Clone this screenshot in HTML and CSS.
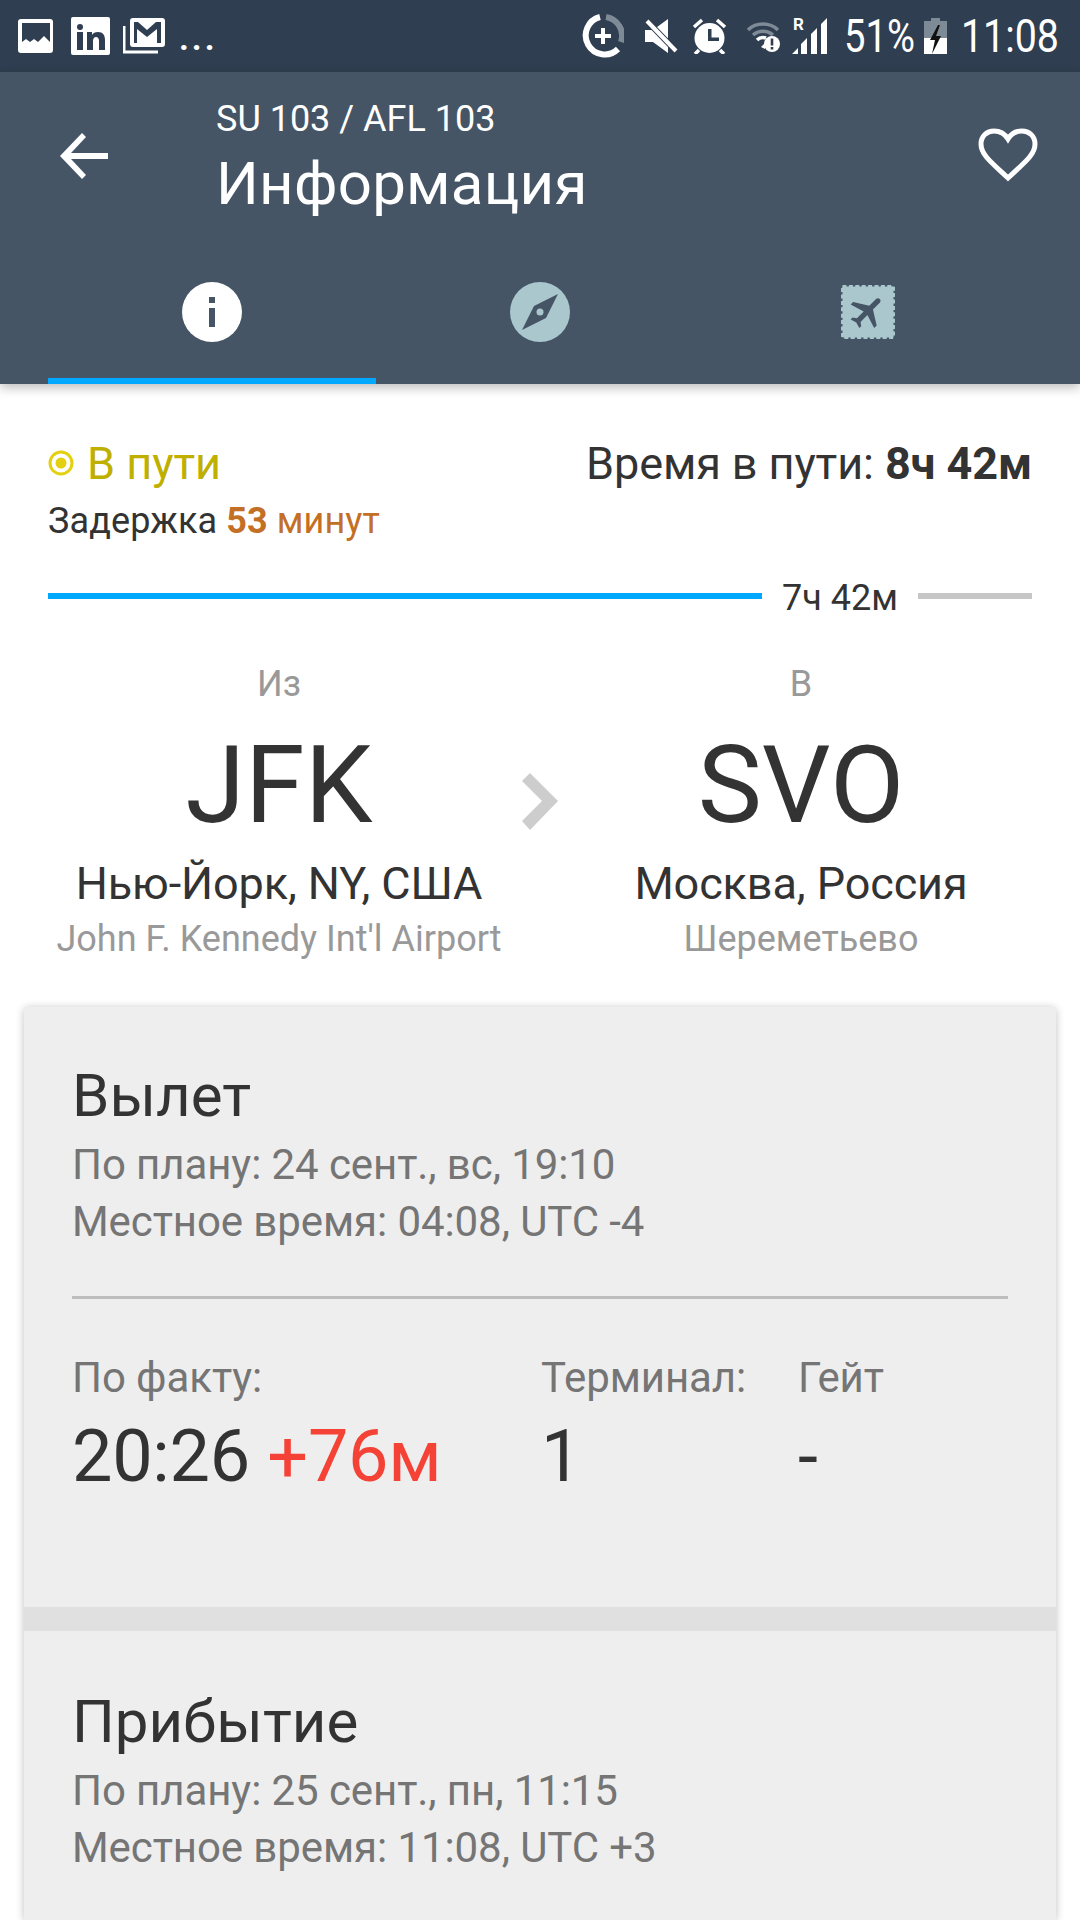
FILE: index.html
```html
<!DOCTYPE html>
<html lang="en">
<head>
    <meta charset="UTF-8">
    <meta name="viewport" content="width=device-width, initial-scale=1.0">
    <title>Flight Info</title>
    <link rel="stylesheet" href="styles.css">
</head>
<body>
    <div class="status-bar">
        <div class="status-left">
            <svg class="ic-image" viewBox="0 0 35 34"><rect width="35" height="34" rx="3" fill="#fff"/><path d="M4 4h28v19l-6-6-6 6-4-3-4 3-4-3-4 3z" fill="#2f3e50"/></svg>
            <svg class="ic-linkedin" viewBox="0 0 39 38"><rect width="39" height="38" rx="2" fill="#fff"/><circle cx="9" cy="10" r="3" fill="#2f3e50"/><path d="M6 15h6v18H6zM16 15h5v3c1-2 3-3 6-3 5 0 7 3 7 8v10h-6V24c0-2-1-4-3-4s-3 2-3 4v9h-6z" fill="#2f3e50"/></svg>
            <svg class="ic-gmail" viewBox="0 0 42 36"><path d="M1 8v26h34" fill="none" stroke="#fff" stroke-width="3"/><rect x="7" y="0" width="35" height="29" rx="3" fill="#fff"/><path d="M11 4h4l9 8 9-8h5v21h-4V11l-10 8-10-8v14h-3z" fill="#2f3e50"/></svg>
            <span class="more-dots">...</span>
        </div>
        <div class="status-right">
            <svg class="ic-saver" viewBox="0 0 42 44"><path d="M24 3a19 19 0 0 1 15 25" fill="none" stroke="#7f8a97" stroke-width="6"/><path d="M18 3a19 19 0 1 0 18 32" fill="none" stroke="#fff" stroke-width="6"/><path d="M19 14h4v6h6v4h-6v6h-4v-6h-6v-4h6z" fill="#fff"/></svg>
            <svg class="ic-mute" viewBox="0 0 33 34"><path d="M0 11h8L23 0v34L8 23H0z" fill="#fff"/><path d="M2 2l29 30" stroke="#2f3e50" stroke-width="6"/><path d="M2 2l29 30" stroke="#fff" stroke-width="4"/></svg>
            <svg class="ic-alarm" viewBox="0 0 37 36"><circle cx="18.5" cy="20" r="15" fill="#fff"/><path d="M3 9l8-7M34 9l-8-7M8 32l-4 4M29 32l4 4" stroke="#fff" stroke-width="3.5"/><path d="M17 11h3.5v8.5H28V23H17z" fill="#2f3e50"/></svg>
            <svg class="ic-wifi" viewBox="0 0 33 34"><path d="M1 11c8-8 22-8 30 0M6 16c6-5 14-5 20 0" fill="none" stroke="#7f8a97" stroke-width="3.5"/><path d="M10 21c3-3 6-3 9-2" fill="none" stroke="#fff" stroke-width="3.5"/><path d="M14 28l4-4v6z" fill="#fff"/><circle cx="25" cy="25" r="8" fill="#fff"/><path d="M23.7 19.5h2.6v7h-2.6zM23.7 28h2.6v2.6h-2.6z" fill="#2f3e50"/></svg>
            <div class="signal">
                <span class="roam">R</span>
                <svg class="ic-signal" viewBox="0 0 35 36"><path d="M0 36l6-6v6zM9 36V26l6-6v16zM19 36V16l6-6v26zM29 36V6l6-6v36z" fill="#fff"/></svg>
            </div>
            <span class="status-text battery-pct">51%</span>
            <svg class="ic-battery" viewBox="0 0 23 36"><path d="M7 0h9v3h7v18H0V3h7z" fill="#7f8a97"/><path d="M0 20h23v16H0z" fill="#fff"/><path d="M14 7l-8 15h5l-3 14 9-18h-5l4-11z" fill="#111"/></svg>
            <span class="status-text clock">11:08</span>
        </div>
    </div>

    <header class="app-bar">
        <div class="toolbar">
            <svg class="ic-back" viewBox="0 0 48 48"><path d="M48 21H11l15-16-4-4L0 24l22 23 4-4L11 27h37z" fill="#fff"/></svg>
            <div class="titles">
                <div class="subtitle">SU 103 / AFL 103</div>
                <div class="title">Информация</div>
            </div>
            <svg class="ic-heart" viewBox="0 0 60 54"><path d="M30 50C14 35 3 27 3 16 3 8 9 3 16 3c6 0 11 3 14 8 3-5 8-8 14-8 7 0 13 5 13 13 0 11-11 19-27 34z" fill="none" stroke="#fff" stroke-width="5"/></svg>
        </div>
        <nav class="tabs">
            <div class="tab active">
                <svg class="tab-icon" viewBox="0 0 60 60"><circle cx="30" cy="30" r="30" fill="#fff"/><path d="M27 15h6v6h-6zM27 26h6v19h-6z" fill="#455565"/></svg>
            </div>
            <div class="tab">
                <svg class="tab-icon" viewBox="0 0 60 60"><circle cx="30" cy="30" r="30" fill="#a9c7cd"/><path d="M48 12L36 36 12 48 24 24z" fill="#455565"/><circle cx="30" cy="30" r="3.5" fill="#a9c7cd"/></svg>
            </div>
            <div class="tab">
                <svg class="tab-icon stamp" viewBox="0 0 54 54"><rect x="1.5" y="1.5" width="51" height="51" fill="#a9c7cd" stroke="#a9c7cd" stroke-width="3" stroke-dasharray="4 2.4"/><rect x="3" y="3" width="48" height="48" fill="#a9c7cd"/><path transform="translate(27 27) rotate(45) scale(1.75) translate(-12 -12)" d="M21 16v-2l-8-5V3.5c0-.83-.67-1.5-1.5-1.5S10 2.67 10 3.5V9l-8 5v2l8-2.5V19l-2 1.5V22l3.5-1 3.5 1v-1.5L13 19v-5.5l8 2.5z" fill="#455565"/></svg>
            </div>
        </nav>
    </header>

    <main class="content">
        <section class="summary">
            <div class="summary-top">
                <div class="state">
                    <svg class="ic-state" viewBox="0 0 26 26"><circle cx="13" cy="13" r="11" fill="none" stroke="#e3d10f" stroke-width="3"/><circle cx="13" cy="13" r="5.5" fill="#e3d10f"/></svg>
                    <span>В пути</span>
                </div>
                <div class="duration">Время в пути: <strong>8ч 42м</strong></div>
            </div>
            <div class="delay">Задержка <span class="delay-val"><strong>53</strong> минут</span></div>
            <div class="progress">
                <div class="progress-done"></div>
                <span class="progress-label">7ч 42м</span>
                <div class="progress-left"></div>
            </div>
        </section>

        <section class="route">
            <div class="airport">
                <div class="airport-label">Из</div>
                <div class="airport-code">JFK</div>
                <div class="airport-city">Нью-Йорк, NY, США</div>
                <div class="airport-name">John F. Kennedy Int'l Airport</div>
            </div>
            <svg class="ic-chevron" viewBox="0 0 36 57"><path d="M0 8l8-8 28 28-28 29-8-9 20-20z" fill="#cdcdcd"/></svg>
            <div class="airport">
                <div class="airport-label">В</div>
                <div class="airport-code">SVO</div>
                <div class="airport-city">Москва, Россия</div>
                <div class="airport-name">Шереметьево</div>
            </div>
        </section>

        <section class="card">
            <div class="leg leg-first">
                <h2>Вылет</h2>
                <p>По плану: 24 сент., вс, 19:10</p>
                <p>Местное время: 04:08, UTC -4</p>
                <hr>
                <div class="facts">
                    <div>
                        <div class="fact-label">По факту:</div>
                        <div class="fact-value">20:26 <span class="late">+76м</span></div>
                    </div>
                    <div>
                        <div class="fact-label">Терминал:</div>
                        <div class="fact-value">1</div>
                    </div>
                    <div>
                        <div class="fact-label">Гейт</div>
                        <div class="fact-value">-</div>
                    </div>
                </div>
            </div>
            <div class="leg leg-last">
                <h2>Прибытие</h2>
                <p>По плану: 25 сент., пн, 11:15</p>
                <p>Местное время: 11:08, UTC +3</p>
            </div>
        </section>
    </main>
</body>
</html>
```

FILE: styles.css
```css
html, body {
    margin: 0;
    height: 1920px;
    overflow: hidden;
}
body {
    font-family: Roboto, sans-serif;
    background-color: #fff;
    color: #333;
    display: flex;
    flex-direction: column;
}
svg {
    display: block;
    flex: none;
}
.status-bar {
    height: 72px;
    flex: none;
    background-color: #2f3e50;
    display: flex;
    justify-content: space-between;
    align-items: center;
    padding: 0 22px 0 18px;
}
.status-left, .status-right {
    display: flex;
    align-items: center;
}
.ic-image { width: 35px; height: 34px; }
.ic-linkedin { width: 39px; height: 38px; margin-left: 18px; }
.ic-gmail { width: 42px; height: 36px; margin-left: 13px; }
.more-dots {
    color: #fff;
    font-size: 34px;
    font-weight: bold;
    line-height: 40px;
    letter-spacing: 3px;
    margin-left: 14px;
    margin-top: 4px;
}
.ic-saver { width: 42px; height: 44px; }
.ic-mute { width: 33px; height: 34px; margin-left: 21px; }
.ic-alarm { width: 37px; height: 36px; margin-left: 13px; }
.ic-wifi { width: 33px; height: 34px; margin-left: 19px; }
.signal {
    position: relative;
    width: 35px;
    height: 36px;
    margin-left: 12px;
}
.ic-signal { width: 35px; height: 36px; }
.roam {
    position: absolute;
    left: 1px;
    top: -3px;
    color: #fff;
    font-size: 17px;
    font-weight: bold;
    line-height: 18px;
}
.status-text {
    color: #fff;
    font-size: 46px;
    line-height: 48px;
    display: inline-block;
    transform: scaleX(0.855);
    transform-origin: left center;
    white-space: nowrap;
}
.battery-pct { width: 70px; margin-left: 17px; transform: scaleX(0.83); }
.ic-battery { width: 23px; height: 36px; margin-left: 10px; }
.clock { width: 97px; margin-left: 14px; }

.app-bar {
    height: 312px;
    flex: none;
    background-color: #455565;
    box-shadow: 0 4px 10px rgba(0,0,0,0.25);
    position: relative;
    box-sizing: border-box;
    padding: 0 48px;
}
.toolbar {
    height: 186px;
    display: flex;
    align-items: flex-start;
    position: relative;
}
.ic-back { width: 48px; height: 48px; margin: 60px 0 0 12px; }
.titles { margin-left: 108px; padding-top: 25px; }
.subtitle {
    color: #fff;
    font-size: 36px;
    line-height: 44px;
}
.title {
    color: #fff;
    font-size: 60px;
    line-height: 74px;
    letter-spacing: 0.25px;
    margin-top: 6px;
}
.ic-heart { width: 60px; height: 54px; margin: 56px 0 0 auto; position: relative; left: 6px; }
.tabs {
    display: grid;
    grid-template-columns: 1fr 1fr 1fr;
    height: 126px;
}
.tab {
    display: flex;
    justify-content: center;
    padding-top: 24px;
    box-sizing: border-box;
}
.tab.active { border-bottom: 6px solid #00a8ff; }
.tab-icon { width: 60px; height: 60px; }
.tab-icon.stamp { width: 54px; height: 54px; margin-top: 3px; }

.content {
    flex: 1;
    min-height: 0;
    display: flex;
    flex-direction: column;
}
.summary { padding: 51px 48px 0; }
.summary-top {
    display: flex;
    justify-content: space-between;
    align-items: center;
    height: 56px;
}
.state {
    display: flex;
    align-items: center;
    color: #bfb000;
    font-size: 45px;
}
.ic-state { width: 26px; height: 26px; margin-right: 13px; }
.duration { font-size: 45px; letter-spacing: -0.1px; }
.duration strong { font-weight: bold; }
.delay {
    font-size: 36px;
    line-height: 44px;
    margin-top: 8px;
    letter-spacing: 0.1px;
}
.delay-val { color: #c36f26; }
.progress {
    display: flex;
    align-items: center;
    margin-top: 31px;
    height: 44px;
}
.progress-done { width: 714px; height: 6px; background-color: #00a8ff; }
.progress-label {
    width: 156px;
    text-align: center;
    font-size: 36px;
    white-space: nowrap;
    padding-top: 3px;
}
.progress-left { flex: 1; height: 6px; background-color: #c6c6c6; }

.route {
    display: grid;
    grid-template-columns: 1fr 60px 1fr;
    align-items: center;
    padding: 0 48px;
    margin-top: 44px;
}
.airport { text-align: center; white-space: nowrap; }
.airport-label { font-size: 36px; line-height: 44px; color: #999; }
.airport-code { font-size: 108px; line-height: 128px; margin-top: 15px; }
.airport-city { font-size: 45px; line-height: 50px; margin-top: 10px; letter-spacing: -0.1px; }
.airport-name { font-size: 36px; line-height: 44px; color: #999; margin-top: 8px; }
.ic-chevron { width: 36px; height: 57px; margin: 0 0 20px 12px; }

.card {
    flex: 1;
    min-height: 0;
    display: flex;
    flex-direction: column;
    margin: 46px 24px 0;
    background-color: #e0e0e0;
    border-radius: 4px 4px 0 0;
    box-shadow: 0 1px 8px rgba(0,0,0,0.25);
}
.leg {
    background-color: #eee;
    padding: 55px 48px 0;
}
.leg-first {
    height: 600px;
    flex: none;
    box-sizing: border-box;
    margin-bottom: 24px;
    border-radius: 4px 4px 0 0;
}
.leg-last {
    flex: 1;
    padding-top: 57px;
}
.leg h2 {
    margin: 0 0 7px;
    padding-top: 1px;
    font-size: 60px;
    font-weight: normal;
    line-height: 66px;
}
.leg p {
    margin: 0;
    font-size: 42px;
    line-height: 57px;
    letter-spacing: -0.08px;
    color: #757575;
}
.leg hr {
    border: none;
    height: 3px;
    background-color: #bdbdbd;
    margin: 46px 0 54px;
}
.facts {
    display: grid;
    grid-template-columns: 469px 257px 1fr;
}
.fact-label { font-size: 42px; line-height: 50px; color: #757575; letter-spacing: -0.08px; }
.fact-value { font-size: 72px; line-height: 84px; margin-top: 12px; letter-spacing: -0.3px; }
.late { color: #f44336; }
```
